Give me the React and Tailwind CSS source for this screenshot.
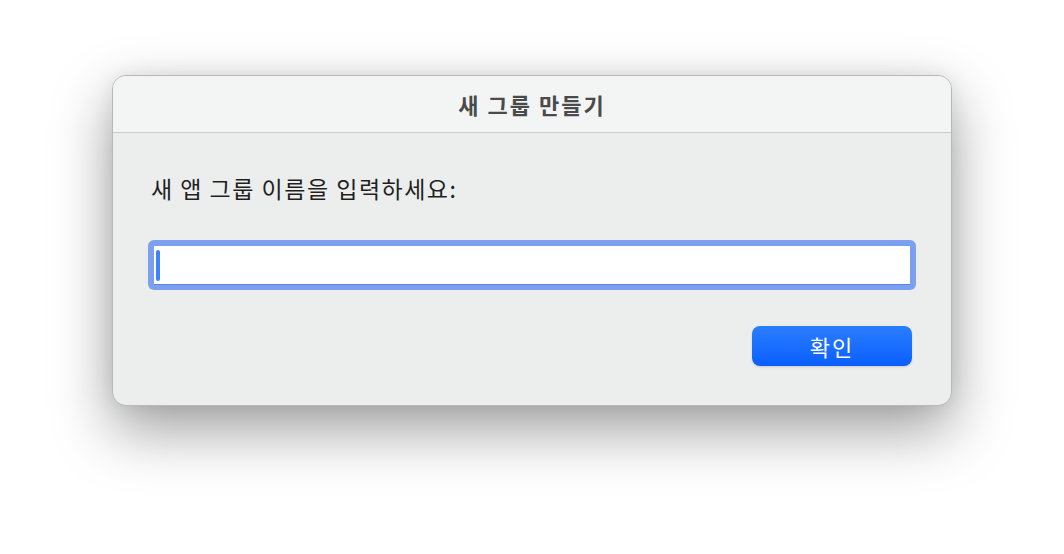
export default function App() {
  return (
    <div
      className="w-[1064px] h-[554px] bg-white pl-[112px] pt-[75px]"
      style={{ fontFamily: '"Noto Sans CJK KR", "Noto Sans", sans-serif' }}
    >
      <div className="w-[840px] h-[331px] rounded-[14px] bg-[#eceeee] border border-[#b8b8b8] shadow-[0_24px_60px_rgba(0,0,0,0.38),0_0_20px_rgba(0,0,0,0.08)] overflow-hidden flex flex-col">
        <div className="h-[57px] shrink-0 bg-[#f3f4f4] border-b border-[#c9caca] flex items-center justify-center">
          <span className="text-[22px] font-bold text-[#4a4a4a] leading-none tracking-[2px]">새 그룹 만들기</span>
        </div>
        <div className="flex-1 flex flex-col px-[35px] pt-[41px]">
          <div className="pl-[3px] text-[23px] leading-[28px] tracking-[1.5px] text-[#1f1f1f]">새 앱 그룹 이름을 입력하세요:</div>
          <div className="mt-[38px] h-[50px] rounded-[6px] bg-[#7ca0ef] p-[6px] pb-[5px]">
            <div className="h-full bg-white border-b border-[#5a86e6] flex items-center pl-[2px]">
              <div className="w-[4px] h-[31px] rounded-full bg-[#3f84ff]" />
            </div>
          </div>
          <div className="mt-[36px] flex justify-end pr-[4px]">
            <button className="w-[160px] h-[40px] rounded-[8px] bg-gradient-to-b from-[#2a7dff] to-[#0a5eff] shadow-[0_1px_2px_rgba(0,0,0,0.15)] text-white text-[22px] tracking-[2px] leading-none flex items-center justify-center">
              확인
            </button>
          </div>
        </div>
      </div>
    </div>
  );
}
